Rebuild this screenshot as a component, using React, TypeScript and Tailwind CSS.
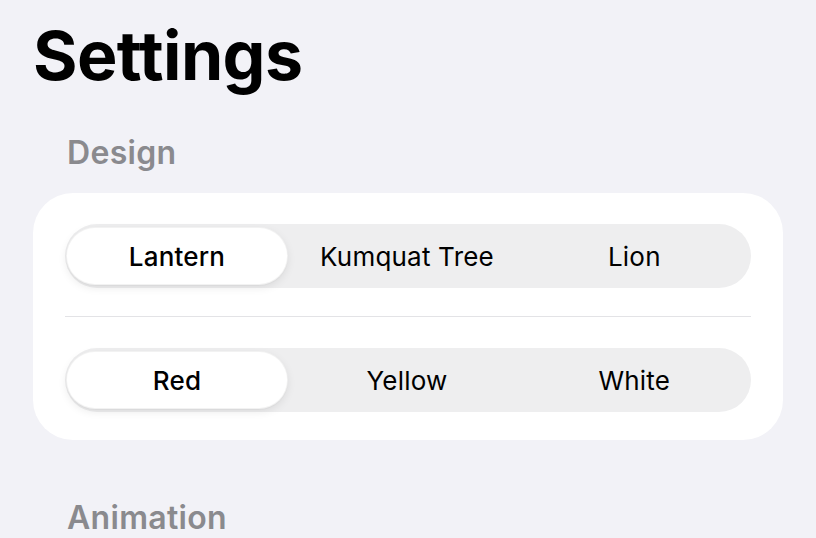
import React from "react";

const font = { fontFamily: "Inter, 'Noto Sans', sans-serif" };

function Segmented({ items, selected }: { items: string[]; selected: number }) {
  return (
    <div className="grid h-[64px] grid-cols-3 rounded-full bg-[#eeeeef] py-[3px] pl-[1px] pr-[3px]">
      {items.map((it, i) =>
        i === selected ? (
          <div key={it} className="flex">
            <div className="flex w-[222px] items-center justify-center rounded-full border border-black/[0.05] bg-white text-[26px] font-medium tracking-[0.2px] text-black shadow-[0_3px_8px_rgba(0,0,0,0.08),0_1px_1px_rgba(0,0,0,0.03)]">
              {it}
            </div>
          </div>
        ) : (
          <div key={it} className="flex items-center justify-center text-[26px] font-normal tracking-[0.2px] text-black">
            {it}
          </div>
        )
      )}
    </div>
  );
}

export default function App() {
  return (
    <div className="h-[538px] w-[816px] overflow-hidden bg-[#f2f2f7]" style={font}>
      <div className="px-[33px] pt-[21px]">
        <h1 className="text-[68px] font-bold leading-none tracking-[-0.6px] text-black">Settings</h1>
        <div className="mt-[48px] pl-[34px] text-[32px] font-semibold leading-none tracking-[0.3px] text-[#8a8a8e]">Design</div>
        <div className="mt-[24px] flex flex-col rounded-[40px] bg-white px-[32px] pt-[31px] pb-[28px]">
          <Segmented items={["Lantern", "Kumquat Tree", "Lion"]} selected={0} />
          <div className="mt-[28px] mb-[31px] h-px bg-[#e3e3e6]" />
          <Segmented items={["Red", "Yellow", "White"]} selected={0} />
        </div>
        <div className="mt-[62px] pl-[34px] text-[32px] font-semibold leading-none tracking-[0.3px] text-[#8a8a8e]">Animation</div>
      </div>
    </div>
  );
}
